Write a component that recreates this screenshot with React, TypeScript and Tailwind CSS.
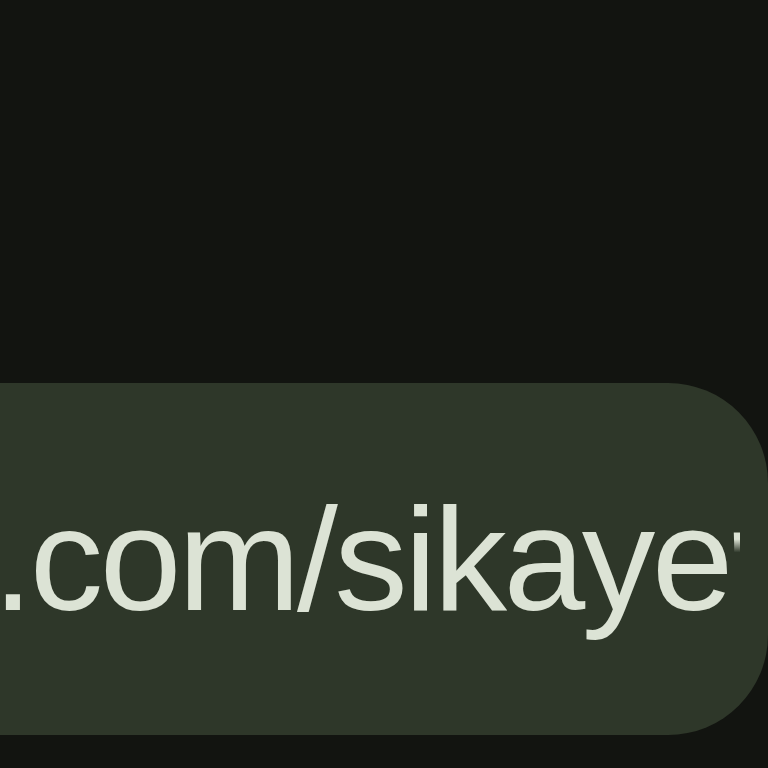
export default function App() {
  return (
    <div className="h-[768px] w-[768px] overflow-hidden bg-[#121410] pt-[383px]">
      <div className="flex h-[352px] w-[768px] items-center justify-end overflow-hidden rounded-r-[100px] bg-[#2e3729] pr-[28px]">
        <div
          className="flex shrink-0 items-baseline whitespace-nowrap text-[147px] leading-none tracking-[-3.5px] text-[#dce3d5]"
          style={{ fontFamily: '"Liberation Sans", Arial, sans-serif' }}
        >
          <span>x.com/sikaye</span>
          <span className="-ml-[6px] inline-block w-[16px] overflow-hidden">
            <span className="bg-gradient-to-b from-[#dce3d5] from-[38%] to-transparent to-[46%] bg-clip-text text-transparent">
              r
            </span>
          </span>
        </div>
      </div>
    </div>
  )
}
